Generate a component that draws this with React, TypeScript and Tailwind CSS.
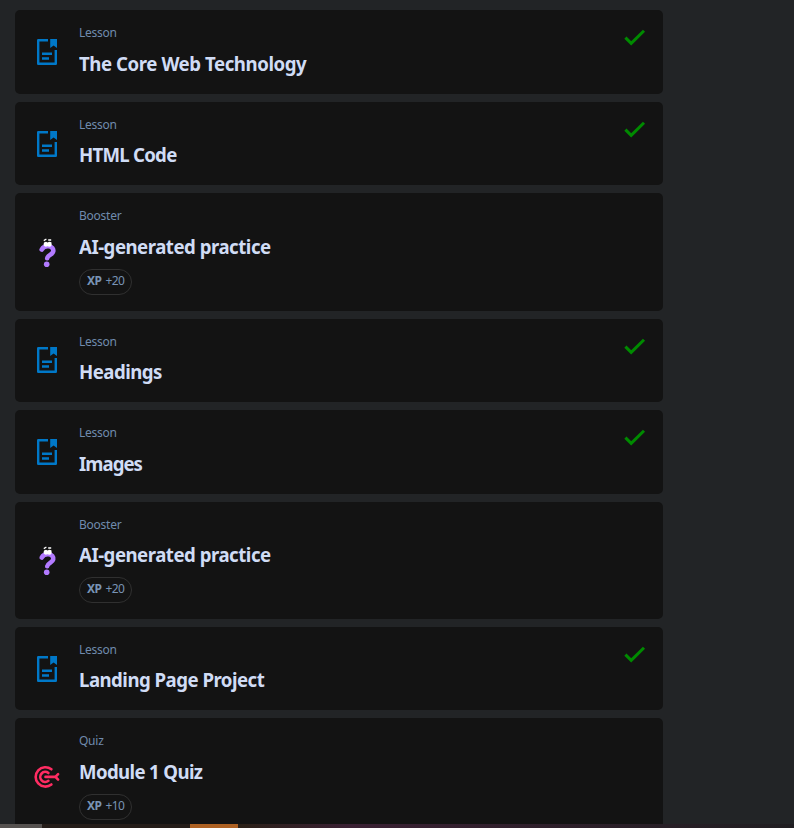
type Kind = 'Lesson' | 'Booster' | 'Quiz';

interface Item {
  kind: Kind;
  title: string;
  height: string;
  tracking: string;
  gap: string;
  iconPad?: string;
  xp?: string;
  done?: boolean;
}

const items: Item[] = [
  { kind: 'Lesson', title: 'The Core Web Technology', height: 'h-[84px]', tracking: 'tracking-[-0.45px]', gap: 'pt-[6px]', done: true },
  { kind: 'Lesson', title: 'HTML Code', height: 'h-[83px]', tracking: 'tracking-[-0.78px]', gap: 'pt-[5px]', done: true },
  { kind: 'Booster', title: 'AI-generated practice', height: 'h-[118px]', tracking: 'tracking-[-0.51px]', gap: 'pt-[6px]', xp: '+20' },
  { kind: 'Lesson', title: 'Headings', height: 'h-[83px]', tracking: 'tracking-[-0.55px]', gap: 'pt-[5px]', iconPad: 'pb-[2px]', done: true },
  { kind: 'Lesson', title: 'Images', height: 'h-[84px]', tracking: 'tracking-[-1px]', gap: 'pt-[6px]', done: true },
  { kind: 'Booster', title: 'AI-generated practice', height: 'h-[117px]', tracking: 'tracking-[-0.51px]', gap: 'pt-[5px]', iconPad: 'pb-[2px]', xp: '+20' },
  { kind: 'Lesson', title: 'Landing Page Project', height: 'h-[83px]', tracking: 'tracking-[-0.54px]', gap: 'pt-[5px]', done: true },
  { kind: 'Quiz', title: 'Module 1 Quiz', height: 'h-[118px]', tracking: 'tracking-[-0.66px]', gap: 'pt-[6px]', xp: '+10' },
];

function KindIcon({ kind }: { kind: Kind }) {
  if (kind === 'Lesson') {
    return (
      <svg width="32" height="32" viewBox="0 0 32 32" fill="none" stroke="#0078c8" strokeWidth="2.4" strokeLinejoin="round">
        <path d="M17 4.2H7.2v23.6h17.6V14" />
        <path d="M19.2 3h6.8v9l-3.4-2.6-3.4 2.6z" fill="#0078c8" stroke="none" />
        <path d="M11 17.8h10M11 22.5h7" />
      </svg>
    );
  }
  if (kind === 'Booster') {
    return (
      <svg width="32" height="32" viewBox="0 0 32 32" fill="none">
        <path d="M10.7 13.6C12.4 10.6 15 10 17.4 10.2c3.6.3 5.4 2.6 4.8 5.4-.7 3.2-5.6 3.4-6 6.6" stroke="#b27aff" strokeWidth="4.6" strokeLinecap="round" strokeLinejoin="round" />
        <circle cx="15.7" cy="28.2" r="2.8" fill="#b27aff" />
        <path d="M13 6.6l2-.8 1.6.8 1.5-.9 2.3.6.3 2.6-1 1.5-1.6.4-1.5-.6-1.8.5-1.6-.7-.6-1.6z" fill="#fff" />
        <path d="M12.8 4.6l2.6-1.6M17.2 4h3" stroke="#fff" strokeWidth="1.3" />
      </svg>
    );
  }
  return (
    <svg width="32" height="32" viewBox="0 0 32 32" fill="none" stroke="#ff2c62" strokeWidth="2.6" strokeLinecap="round" strokeLinejoin="round">
      <path d="M20.4 8.3A9.7 9.7 0 1 0 20.4 23.5" />
      <path d="M17.4 12A5 5 0 1 0 17.4 19.8" />
      <path d="M14.5 15.9h9.5" />
      <path d="M24.5 15.9l2.6-2.7M24.5 15.9l2.6 2.7" />
    </svg>
  );
}

function Card({ item }: { item: Item }) {
  return (
    <div className={`${item.height} flex shrink-0 items-start rounded-[5px] bg-[#131313] pl-4 pr-[17px]`}>
      <div className={`${item.iconPad ?? ''} flex w-12 self-stretch items-center`}>
        <KindIcon kind={item.kind} />
      </div>
      <div className="min-w-0 flex-1 pt-[13px]">
        <div className="h-5 text-[12px] leading-5 tracking-[-0.25px] text-[#708bad]">{item.kind}</div>
        <div className={item.gap}>
          <div className={`${item.tracking} h-[30px] w-max origin-left scale-x-[0.96] whitespace-nowrap text-[19.4px] font-[680] leading-[30px] text-[#d0dcf5]`}>
            {item.title}
          </div>
        </div>
        {item.xp && (
          <div className="mt-[7px] inline-flex h-[26px] items-center gap-1 rounded-full border border-[#303030] px-[7px] pb-[2px] text-[12px] leading-none tracking-[-0.55px] text-[#7893b5]">
            <span className="font-bold">XP</span>
            <span>{item.xp}</span>
          </div>
        )}
      </div>
      {item.done && (
        <svg className="mt-[15px]" width="24" height="24" viewBox="0 0 24 24" fill="none" stroke="#008a00" strokeWidth="3">
          <path d="M3.4 12.6l5.8 5.8L22 5.8" />
        </svg>
      )}
    </div>
  );
}

export default function App() {
  return (
    <div className="flex h-[828px] w-[794px] flex-col overflow-hidden bg-[#222426] font-['Noto_Sans','Open_Sans',sans-serif]">
      <div className="flex min-h-0 flex-1 flex-col gap-2 overflow-hidden pl-[15px] pt-[10px]">
        {items.map((item, i) => (
          <div key={i} className="w-[648px] shrink-0">
            <Card item={item} />
          </div>
        ))}
      </div>
      <div className="flex h-1 shrink-0">
        <div className="w-[42px] bg-[#565250]" />
        <div className="w-[148px] bg-[#251d19]" />
        <div className="w-12 bg-[#ad6123]" />
        <div className="flex-1 bg-linear-to-r from-[#2b2017] via-[#3a2033] via-20% to-[#201e21]" />
      </div>
    </div>
  );
}
